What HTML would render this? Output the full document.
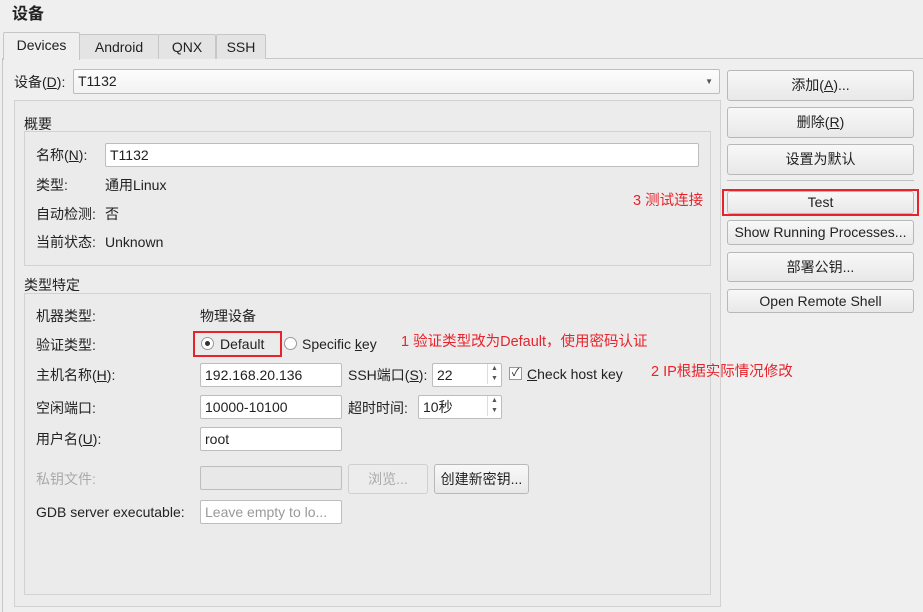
<!DOCTYPE html>
<html><head><meta charset="utf-8"><style>
*{box-sizing:border-box;margin:0;padding:0}
body{width:923px;height:612px;background:#efefef;font-family:"Liberation Sans","Noto Sans CJK SC",sans-serif;font-size:14px;color:#222;position:relative;overflow:hidden}
.a{position:absolute;white-space:nowrap;line-height:17px}
.in{position:absolute;background:#fff;border:1px solid #bdbdbd;border-radius:2px;padding:0 4px;line-height:22px;height:24px}
.btn{position:absolute;background:linear-gradient(#f8f8f8,#e8e8e8);border:1px solid #b8b8b8;border-radius:3px;text-align:center;line-height:24px;height:26px}
.box{position:absolute;border:1px solid #d2d2d2;background:#ebebeb}
.red{color:#e8232b}
.tab{position:absolute;top:34px;height:25px;border:1px solid #c6c6c6;border-bottom:none;background:#e4e4e4;text-align:center;line-height:24px;border-radius:2px 2px 0 0}
.spin{position:absolute;width:14px;font-size:7px;color:#555;text-align:center;line-height:10px;border-left:1px solid #ddd}
</style></head><body>
<div class="a" style="left:12px;top:6px;font-size:16px;font-weight:bold">设备</div>
<div class="a" style="left:2px;top:58px;width:921px;height:554px;border:1px solid #c6c6c6;border-right:none;border-bottom:none"></div>
<div class="tab" style="left:79px;width:80px">Android</div>
<div class="tab" style="left:158px;width:58px">QNX</div>
<div class="tab" style="left:216px;width:50px">SSH</div>
<div class="tab" style="left:3px;top:32px;width:77px;height:28px;background:#efefef;border-color:#c6c6c6">Devices</div>
<div class="a" style="left:14px;top:74px">设备(<u>D</u>):</div>
<div class="in" style="left:73px;top:69px;width:647px;height:25px;background:linear-gradient(#fdfdfd,#f2f2f2);line-height:23px">T1132<span style="position:absolute;right:6px;top:0;font-size:8px;color:#555">▼</span></div>
<div class="box" style="left:14px;top:100px;width:707px;height:507px;background:#ececec"></div>
<div class="a" style="left:24px;top:116px">概要</div>
<div class="box" style="left:24px;top:131px;width:687px;height:135px"></div>
<div class="a" style="left:36px;top:147px">名称(<u>N</u>):</div>
<div class="in" style="left:105px;top:143px;width:594px">T1132</div>
<div class="a" style="left:36px;top:177px">类型:</div><div class="a" style="left:105px;top:177px">通用Linux</div>
<div class="a" style="left:36px;top:206px">自动检测:</div><div class="a" style="left:105px;top:206px">否</div>
<div class="a" style="left:36px;top:234px">当前状态:</div><div class="a" style="left:105px;top:234px">Unknown</div>
<div class="a red" style="left:633px;top:193px;font-size:14.5px">3 测试连接</div>
<div class="a" style="left:24px;top:277px">类型特定</div>
<div class="box" style="left:24px;top:293px;width:687px;height:302px"></div>
<div class="a" style="left:36px;top:308px">机器类型:</div><div class="a" style="left:200px;top:308px">物理设备</div>
<div class="a" style="left:36px;top:337px">验证类型:</div>
<div class="a" style="left:193px;top:331px;width:89px;height:26px;border:2px solid #e8232b"></div>
<div class="a" style="left:201px;top:337px;width:13px;height:13px;border:1px solid #999;border-radius:50%;background:#fff"><div style="position:absolute;left:3px;top:3px;width:5px;height:5px;border-radius:50%;background:#333"></div></div>
<div class="a" style="left:220px;top:336px">Default</div>
<div class="a" style="left:284px;top:337px;width:13px;height:13px;border:1px solid #999;border-radius:50%;background:#fff"></div>
<div class="a" style="left:302px;top:336px">Specific <u>k</u>ey</div>
<div class="a red" style="left:401px;top:334px;font-size:14.5px">1 验证类型改为Default，使用密码认证</div>
<div class="a" style="left:36px;top:367px">主机名称(<u>H</u>):</div>
<div class="in" style="left:200px;top:363px;width:142px">192.168.20.136</div>
<div class="a" style="left:348px;top:367px">SSH端口(<u>S</u>):</div>
<div class="in" style="left:432px;top:363px;width:70px">22</div>
<div class="spin" style="left:487px;top:364px">▲<br>▼</div>
<div class="a" style="left:509px;top:367px;width:13px;height:13px;border:1px solid #999;background:#fff;font-size:11px;line-height:11px;text-align:center">✓</div>
<div class="a" style="left:527px;top:366px"><u>C</u>heck host key</div>
<div class="a red" style="left:651px;top:364px;font-size:14.5px">2 IP根据实际情况修改</div>
<div class="a" style="left:36px;top:400px">空闲端口:</div>
<div class="in" style="left:200px;top:395px;width:142px">10000-10100</div>
<div class="a" style="left:348px;top:400px">超时时间:</div>
<div class="in" style="left:418px;top:395px;width:84px">10秒</div>
<div class="spin" style="left:487px;top:396px">▲<br>▼</div>
<div class="a" style="left:36px;top:431px">用户名(<u>U</u>):</div>
<div class="in" style="left:200px;top:427px;width:142px">root</div>
<div class="a" style="left:36px;top:471px;color:#aaa">私钥文件:</div>
<div class="in" style="left:200px;top:466px;width:142px;background:#e8e8e8"></div>
<div class="btn" style="left:348px;top:464px;width:80px;height:30px;line-height:28px;color:#aaa;background:#ececec;border-color:#d0d0d0">浏览...</div>
<div class="btn" style="left:434px;top:464px;width:95px;height:30px;line-height:28px">创建新密钥...</div>
<div class="a" style="left:36px;top:504px">GDB server executable:</div>
<div class="in" style="left:200px;top:500px;width:142px;color:#999">Leave empty to lo...</div>
<div class="btn" style="left:727px;top:70px;width:187px;height:31px;line-height:29px">添加(<u>A</u>)...</div>
<div class="btn" style="left:727px;top:107px;width:187px;height:31px;line-height:29px">删除(<u>R</u>)</div>
<div class="btn" style="left:727px;top:144px;width:187px;height:31px;line-height:29px">设置为默认</div>
<div class="a" style="left:727px;top:180px;width:187px;border-top:1px solid #c0c0c0"></div>
<div class="a" style="left:722px;top:189px;width:197px;height:27px;border:2px solid #e8232b"></div>
<div class="btn" style="left:727px;top:191px;width:187px;height:23px;line-height:21px">Test</div>
<div class="btn" style="left:727px;top:220px;width:187px;height:25px;line-height:23px">Show Running Processes...</div>
<div class="btn" style="left:727px;top:252px;width:187px;height:30px;line-height:28px">部署公钥...</div>
<div class="btn" style="left:727px;top:289px;width:187px;height:24px;line-height:22px">Open Remote Shell</div>
</body></html>
